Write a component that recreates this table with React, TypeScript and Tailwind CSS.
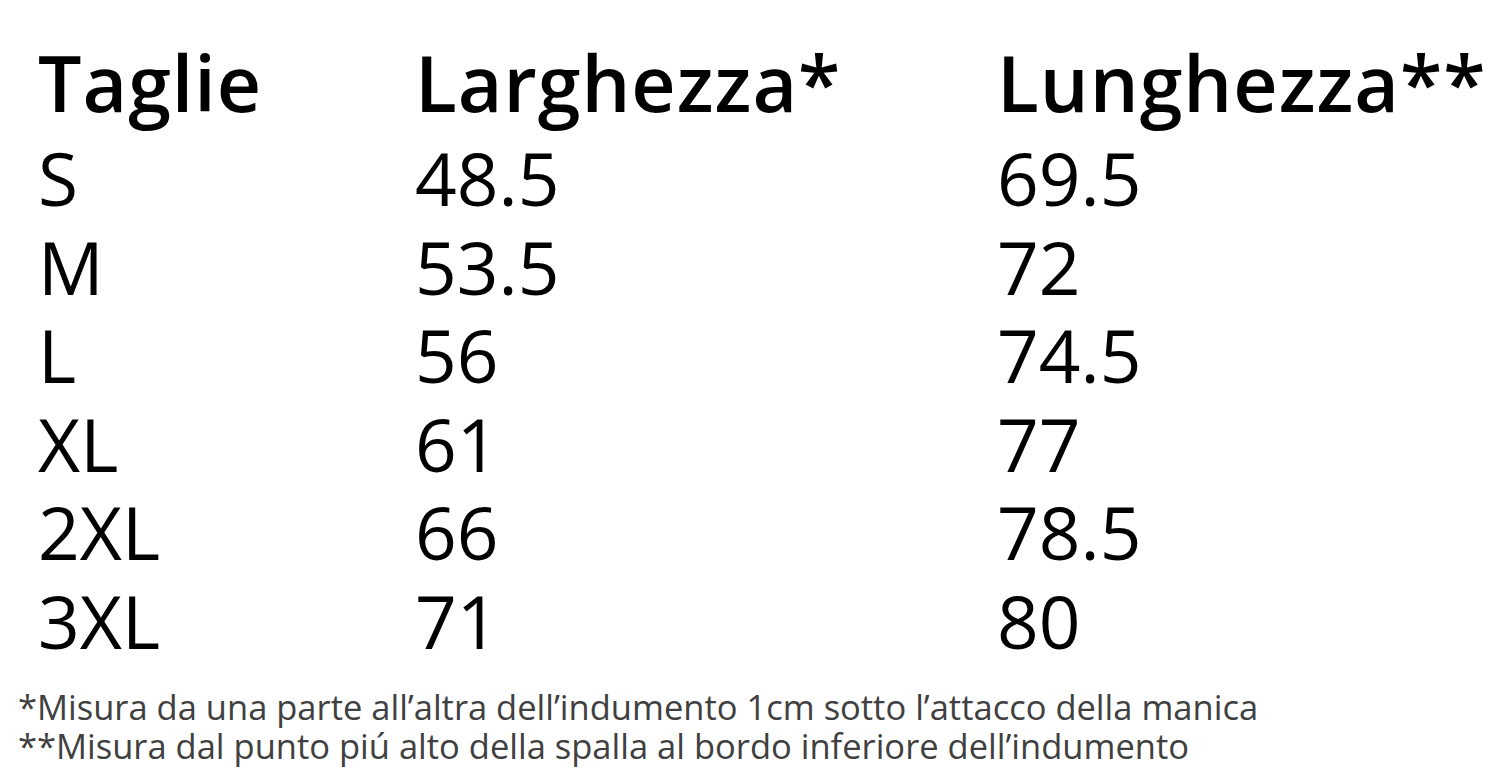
export default function App() {
  const rows = [
    ["S", "48.5", "69.5"],
    ["M", "53.5", "72"],
    ["L", "56", "74.5"],
    ["XL", "61", "77"],
    ["2XL", "66", "78.5"],
    ["3XL", "71", "80"],
  ];

  return (
    <div
      className="w-[1500px] h-[783px] bg-white text-black overflow-hidden"
      style={{ fontFamily: '"Open Sans", "Noto Sans", sans-serif' }}
    >
      <div className="pl-[38px] pt-[32px]">
        <div className="grid grid-cols-[377px_582px_1fr] text-[77px] font-semibold leading-[102px] tracking-[1px]">
          <div>Taglie</div>
          <div>Larghezza*</div>
          <div>Lunghezza**</div>
        </div>
        {rows.map((r) => (
          <div
            key={r[0]}
            className="grid grid-cols-[377px_582px_1fr] text-[73px] leading-[88.5px]"
          >
            <div>{r[0]}</div>
            <div>{r[1]}</div>
            <div>{r[2]}</div>
          </div>
        ))}
      </div>
      <div className="pl-[18px] pt-[22px] text-[34.5px] leading-[39px] text-[#404040]">
        <p>*Misura da una parte all’altra dell’indumento 1cm sotto l’attacco della manica</p>
        <p>**Misura dal punto piú alto della spalla al bordo inferiore dell’indumento</p>
      </div>
    </div>
  );
}
